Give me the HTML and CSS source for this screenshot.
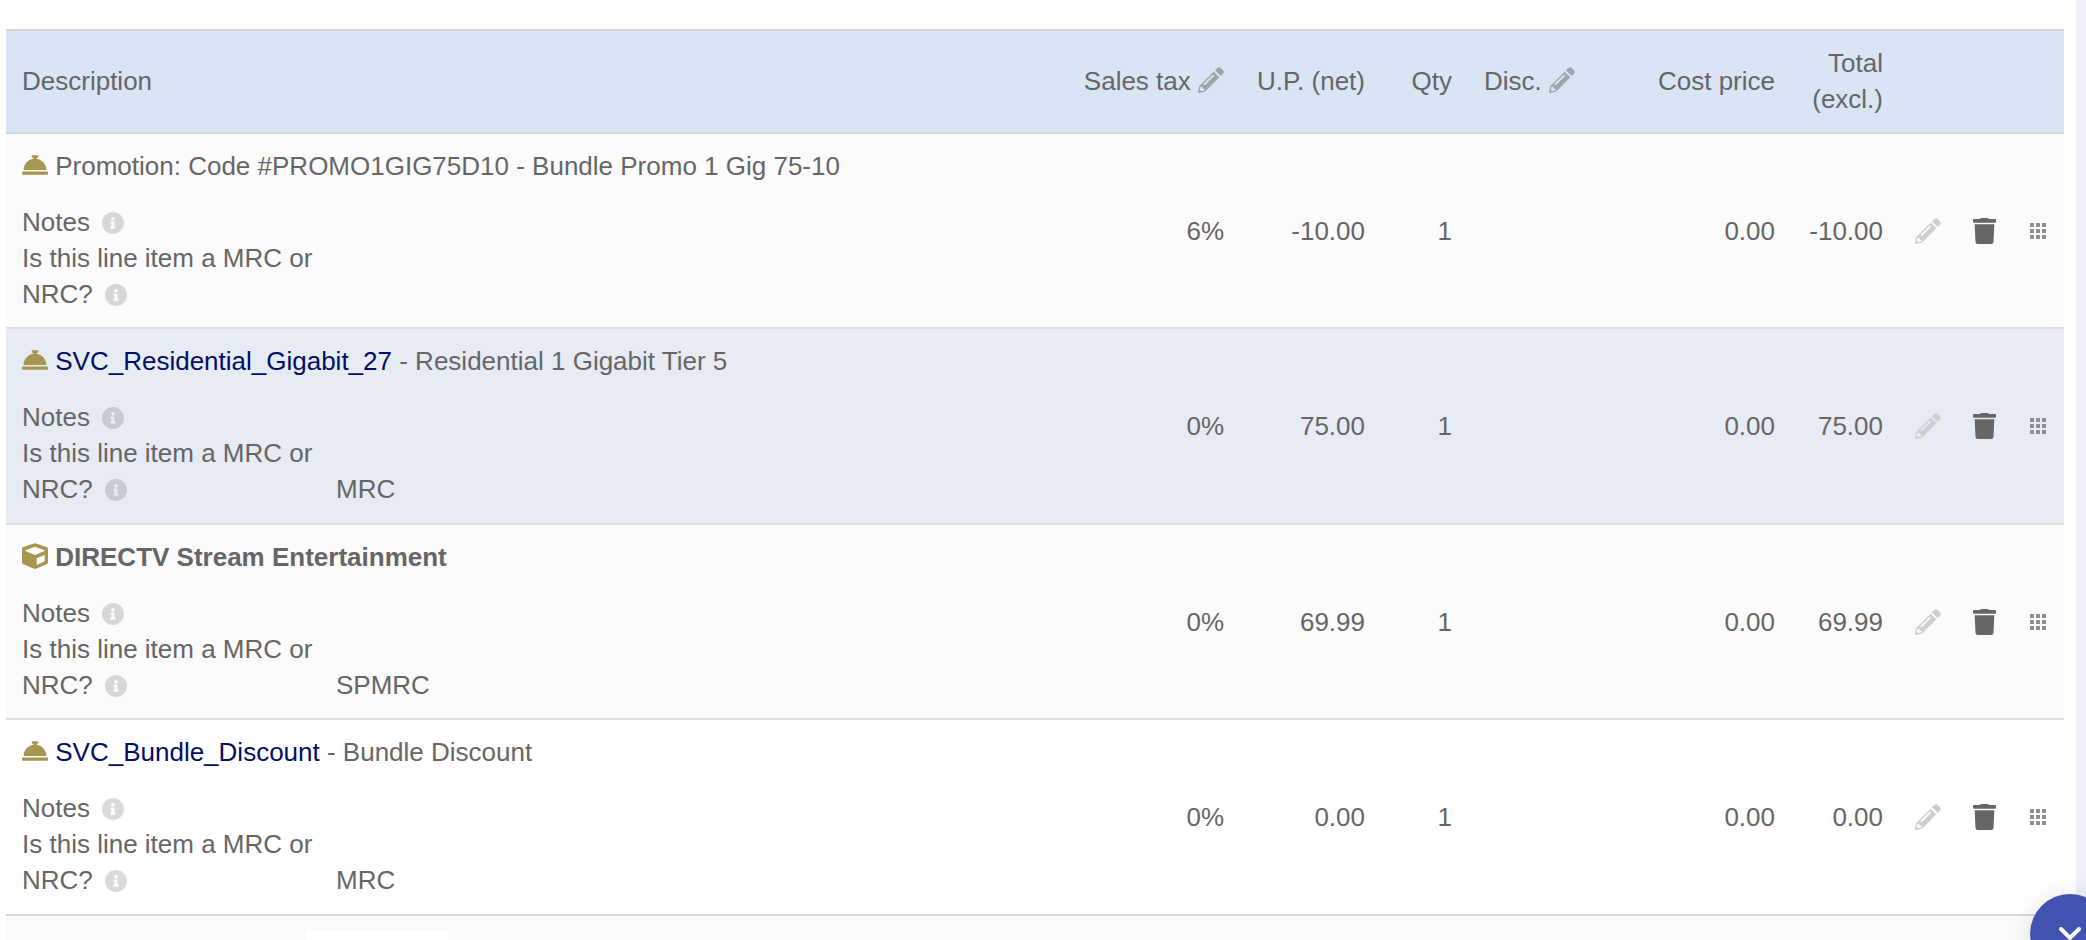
FILE: index.html
```html
<!DOCTYPE html>
<html lang="en">
<head>
<meta charset="utf-8">
<title>Line items</title>
<link rel="stylesheet" href="styles.css">
</head>
<body>
<svg class="sprite" aria-hidden="true">
  <symbol id="bell" viewBox="0 0 512 512"><path d="M288 130.54V112h16c8.84 0 16-7.16 16-16V80c0-8.84-7.16-16-16-16h-96c-8.84 0-16 7.16-16 16v16c0 8.84 7.16 16 16 16h16v18.54C115.49 146.11 32 239.18 32 352h448c0-112.82-83.49-205.89-192-221.46zM496 384H16c-8.84 0-16 7.16-16 16v32c0 8.84 7.16 16 16 16h480c8.84 0 16-7.16 16-16v-32c0-8.84-7.16-16-16-16z"/></symbol>
  <symbol id="cube" viewBox="0 0 78 78"><path fill-rule="evenodd" d="M36 1.500Q39 .5 42 1.500L74 12Q78 13.500 78 17.500V58Q78 61.500 75 63L42 77Q39 78.200 36 77L3 63Q0 61.500 0 58V17.500Q0 13.500 4 12ZM39 11L10 22V24L39 36L68 24V22ZM44 46V66L68 55V36Z"/></symbol>
  <symbol id="info" viewBox="8 8 496 496"><path d="M256 8C119.043 8 8 119.083 8 256c0 136.997 111.043 248 248 248s248-111.003 248-248C504 119.083 392.957 8 256 8zm0 110c23.196 0 42 18.804 42 42s-18.804 42-42 42-42-18.804-42-42 18.804-42 42-42zm56 254c0 6.627-5.373 12-12 12h-88c-6.627 0-12-5.373-12-12v-24c0-6.627 5.373-12 12-12h12v-64h-12c-6.627 0-12-5.373-12-12v-24c0-6.627 5.373-12 12-12h64c6.627 0 12 5.373 12 12v100h12c6.627 0 12 5.373 12 12v24z"/></symbol>
  <symbol id="pencil" viewBox="0 0 78 78"><path fill-rule="evenodd" d="M51 10L58 3Q63 -2 68 3L75 10Q80 15 75 20L68 27ZM47 14L64 31L24 71Q21 74 17 75L3 78Q0 78 0 75L3 61Q4 57 7 54ZM18 49Q16 52 18 53Q20 55 22 53L47 28Q49 26 47 24Q45 22 43 24ZM7 60L5 68L10 73L20 70V65H14V59Z"/></symbol>
  <symbol id="trash" viewBox="0 0 69 78"><path d="M21 3Q22 0 26 0H43Q47 0 48 3H66Q69 3 69 6V11Q69 14 66 14H3Q0 14 0 11V6Q0 3 3 3ZM5 19H64L61.500 72Q61 78 55 78H14Q8 78 7.500 72Z"/></symbol>
  <symbol id="grip" viewBox="0 0 16 16"><path d="M0 0h4v4H0zM6 0h4v4H6zM12 0h4v4h-4zM0 6h4v4H0zM6 6h4v4H6zM12 6h4v4h-4zM0 12h4v4H0zM6 12h4v4H6zM12 12h4v4h-4z"/></symbol>
</svg>
<main class="panel">
  <table class="lines">
    <colgroup>
      <col><col class="c-tax"><col class="c-price"><col class="c-qty"><col class="c-disc"><col class="c-cost"><col class="c-total"><col class="c-edit"><col class="c-delete"><col class="c-move">
    </colgroup>
    <thead>
      <tr>
        <th class="left" scope="col">Description</th>
        <th scope="col">Sales tax <button class="inline-edit" aria-label="Edit sales tax"><svg class="icon"><use href="#pencil"/></svg></button></th>
        <th scope="col">U.P. (net)</th>
        <th scope="col">Qty</th>
        <th class="left" scope="col">Disc. <button class="inline-edit" aria-label="Edit discount"><svg class="icon"><use href="#pencil"/></svg></button></th>
        <th scope="col">Cost price</th>
        <th scope="col">Total (excl.)</th>
        <td></td><td></td><td></td>
      </tr>
    </thead>
    <tbody>
      <tr class="shaded">
        <td class="left">
          <div class="title"><svg class="icon kind"><use href="#bell"/></svg> Promotion: Code #PROMO1GIG75D10 - Bundle Promo 1 Gig 75-10</div>
          <dl class="fields">
            <dt>Notes<svg class="info"><use href="#info"/></svg></dt><dd></dd>
            <dt>Is this line item a MRC or NRC?<svg class="info"><use href="#info"/></svg></dt><dd></dd>
          </dl>
        </td>
        <td>6%</td><td>-10.00</td><td>1</td><td></td><td>0.00</td><td>-10.00</td>
        <td class="action"><button class="edit" aria-label="Edit line"><svg class="icon"><use href="#pencil"/></svg></button></td>
        <td class="action"><button class="delete" aria-label="Delete line"><svg class="trash"><use href="#trash"/></svg></button></td>
        <td class="action"><button class="move" aria-label="Move line"><svg class="grip"><use href="#grip"/></svg></button></td>
      </tr>
      <tr class="active">
        <td class="left">
          <div class="title"><svg class="icon kind"><use href="#bell"/></svg> <a href="#">SVC_Residential_Gigabit_27</a> - Residential 1 Gigabit Tier 5</div>
          <dl class="fields">
            <dt>Notes<svg class="info"><use href="#info"/></svg></dt><dd></dd>
            <dt>Is this line item a MRC or NRC?<svg class="info"><use href="#info"/></svg></dt><dd>MRC</dd>
          </dl>
        </td>
        <td>0%</td><td>75.00</td><td>1</td><td></td><td>0.00</td><td>75.00</td>
        <td class="action"><button class="edit" aria-label="Edit line"><svg class="icon"><use href="#pencil"/></svg></button></td>
        <td class="action"><button class="delete" aria-label="Delete line"><svg class="trash"><use href="#trash"/></svg></button></td>
        <td class="action"><button class="move" aria-label="Move line"><svg class="grip"><use href="#grip"/></svg></button></td>
      </tr>
      <tr class="shaded">
        <td class="left">
          <div class="title"><svg class="icon kind"><use href="#cube"/></svg> <strong>DIRECTV Stream Entertainment</strong></div>
          <dl class="fields">
            <dt>Notes<svg class="info"><use href="#info"/></svg></dt><dd></dd>
            <dt>Is this line item a MRC or NRC?<svg class="info"><use href="#info"/></svg></dt><dd>SPMRC</dd>
          </dl>
        </td>
        <td>0%</td><td>69.99</td><td>1</td><td></td><td>0.00</td><td>69.99</td>
        <td class="action"><button class="edit" aria-label="Edit line"><svg class="icon"><use href="#pencil"/></svg></button></td>
        <td class="action"><button class="delete" aria-label="Delete line"><svg class="trash"><use href="#trash"/></svg></button></td>
        <td class="action"><button class="move" aria-label="Move line"><svg class="grip"><use href="#grip"/></svg></button></td>
      </tr>
      <tr>
        <td class="left">
          <div class="title"><svg class="icon kind"><use href="#bell"/></svg> <a href="#">SVC_Bundle_Discount</a> - Bundle Discount</div>
          <dl class="fields">
            <dt>Notes<svg class="info"><use href="#info"/></svg></dt><dd></dd>
            <dt>Is this line item a MRC or NRC?<svg class="info"><use href="#info"/></svg></dt><dd>MRC</dd>
          </dl>
        </td>
        <td>0%</td><td>0.00</td><td>1</td><td></td><td>0.00</td><td>0.00</td>
        <td class="action"><button class="edit" aria-label="Edit line"><svg class="icon"><use href="#pencil"/></svg></button></td>
        <td class="action"><button class="delete" aria-label="Delete line"><svg class="trash"><use href="#trash"/></svg></button></td>
        <td class="action"><button class="move" aria-label="Move line"><svg class="grip"><use href="#grip"/></svg></button></td>
      </tr>
    </tbody>
    <tfoot>
      <tr class="shaded"><td class="left" colspan="10"><input class="new-line" type="text" aria-label="New line"></td></tr>
    </tfoot>
  </table>
</main>
<button class="fab" aria-label="Collapse"><svg class="chevron" viewBox="0 0 24 16"><path d="M3 3L12 12L21 3"/></svg></button>
</body>
</html>
```

FILE: styles.css
```css
* { box-sizing: border-box; }

body {
  margin: 0;
  height: 100vh;
  overflow: hidden;
  background: #f0f1f8;
  color: #666;
  font: 26px/36px "Liberation Sans", Arial, sans-serif;
}

.sprite { display: none; }
svg { fill: currentColor; }

.panel {
  height: 100vh;
  overflow: hidden;
  margin-right: 10px;
  padding: 29px 12px 0 6px;
  background: #fff;
}

.lines {
  width: 100%;
  table-layout: fixed;
  border-collapse: separate;
  border-spacing: 0;
}

.c-tax { width: 173px; }
.c-price { width: 141px; }
.c-qty { width: 87px; }
.c-disc { width: 140px; }
.c-cost { width: 183px; }
.c-total { width: 108px; }
.c-edit { width: 58px; }
.c-delete { width: 55px; }
.c-move { width: 52px; }

th, td {
  padding: 14px 16px;
  border-bottom: 2px solid #dedede;
  font-weight: normal;
  text-align: right;
  vertical-align: middle;
}

th { white-space: nowrap; }
th:nth-child(7) { white-space: normal; }

thead th, thead td {
  border-top: 2px solid #d6d6d6;
  border-bottom-color: #d6d6d6;
  background: #d9e5f5;
}

thead th { padding-bottom: 15px; }

.left { text-align: left; }
.shaded { background: #fbfbfb; }
.active { background: #e7ecf4; }
tbody .left { padding-bottom: 15px; }
tbody tr:nth-child(even) .left { padding-bottom: 16px; }
tbody tr:last-child td { border-bottom-color: #d6d6d6; }

.title { white-space: nowrap; }
.title a { color: #000f66; text-decoration: none; }

.icon { width: 26px; height: 26px; vertical-align: -3px; }
.kind { color: #a5974f; }

.fields {
  display: grid;
  grid-template-columns: 298px 1fr;
  column-gap: 16px;
  align-items: end;
  margin: 20px 0 0;
}

.fields dd { margin: 0; }

.info {
  width: 22px;
  height: 22px;
  margin-left: 12px;
  vertical-align: -3px;
  color: rgba(0, 0, 0, 0.14);
}

button {
  padding: 0;
  border: 0;
  background: none;
  color: inherit;
  font: inherit;
  cursor: pointer;
}

.inline-edit { color: #a0a5ad; }
.action { padding: 0; text-align: center; }
.action button { display: block; margin: 0 auto; }
.action svg { display: block; }
.edit { color: #cecece; }
.trash { width: 23px; height: 26px; }
.move { color: #8f8f8f; }
.grip { width: 16px; height: 16px; }

tfoot td { border-bottom: 0; }

.new-line {
  display: block;
  width: 142px;
  height: 36px;
  margin-left: 284px;
  border: 0;
  background: #fff;
  color: inherit;
  font: inherit;
}

.fab {
  position: fixed;
  right: -24px;
  bottom: -34px;
  display: flex;
  align-items: center;
  justify-content: center;
  width: 80px;
  height: 80px;
  border-radius: 50%;
  background: #4152b0;
  color: #fff;
  box-shadow: 0 2px 24px rgba(0, 0, 0, 0.12);
}

.chevron {
  width: 24px;
  height: 16px;
  fill: none;
  stroke: currentColor;
  stroke-width: 4;
  stroke-linecap: round;
}
```
